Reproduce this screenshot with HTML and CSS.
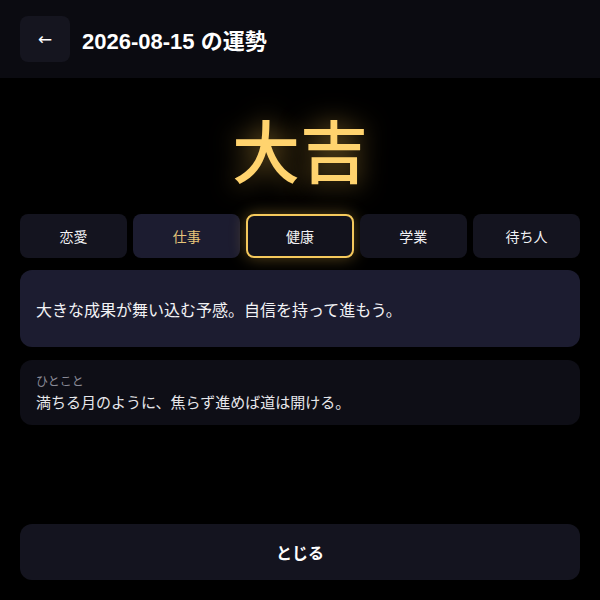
FILE: index.html
```html
<!DOCTYPE html>
<html lang="ja">
  <head>
    <meta charset="UTF-8" />
    <meta name="viewport" content="width=device-width, initial-scale=1.0" />
    <title>2026-08-15 の運勢</title>
    <link rel="stylesheet" href="styles.css">
  </head>
  <body>
    <div class="screen">
      <header class="topbar">
        <button class="back" onclick="history.back()">&larr;</button>
        <h1 class="title">2026-08-15 の運勢</h1>
      </header>

      <main class="content">
        <div class="rank">大吉</div>

        <div class="tabs">
          <button class="tab">恋愛</button>
          <button class="tab hover">仕事</button>
          <button class="tab active">健康</button>
          <button class="tab">学業</button>
          <button class="tab">待ち人</button>
        </div>

        <div class="message">大きな成果が舞い込む予感。自信を持って進もう。</div>

        <div class="note">
          <div class="note-label">ひとこと</div>
          <div class="note-text">満ちる月のように、焦らず進めば道は開ける。</div>
        </div>
      </main>

      <footer class="bottom">
        <button class="close">とじる</button>
      </footer>
    </div>
  </body>
</html>
```

FILE: styles.css
```css
body {
  margin: 0;
  background: #000;
  color: #f2f2f5;
  font-family: "Noto Sans CJK JP", "Noto Sans", sans-serif;
}
button {
  font-family: inherit;
  border: none;
  cursor: pointer;
}
.screen {
  height: 600px;
  display: flex;
  flex-direction: column;
}
.topbar {
  height: 78px;
  box-sizing: border-box;
  padding: 16px 20px;
  display: flex;
  align-items: center;
  gap: 12px;
  background: #0b0b11;
}
.back {
  width: 50px;
  height: 46px;
  border-radius: 8px;
  background: #15151f;
  color: #fff;
  font-family: "DejaVu Sans", sans-serif;
  font-size: 17px;
}
.title {
  margin: 0;
  font-family: "Liberation Sans", "Noto Sans CJK JP", sans-serif;
  font-size: 22px;
  font-weight: 700;
  color: #fff;
}
.content {
  flex: 1;
  padding: 0 20px;
  display: flex;
  flex-direction: column;
}
.rank {
  margin: 16px 0 8px;
  height: 112px;
  text-align: center;
  font-size: 68px;
  font-weight: 500;
  line-height: 110px;
  color: #ffd36e;
  text-shadow: 0 0 26px rgba(255, 200, 80, 0.5);
}
.tabs {
  display: grid;
  grid-template-columns: repeat(5, 1fr);
  gap: 6px;
}
.tab {
  height: 44px;
  border-radius: 8px;
  background: #14141f;
  color: #f2f2f5;
  font-size: 14px;
}
.tab.hover {
  background: #1c1c30;
  color: #e6c47a;
}
.tab.active {
  border: 2px solid #f5c95c;
  background: #12121c;
  box-shadow: 0 0 16px rgba(255, 200, 80, 0.35);
}
.message {
  margin-top: 12px;
  height: 77px;
  box-sizing: border-box;
  padding: 0 16px;
  display: flex;
  align-items: center;
  border-radius: 12px;
  background: #1c1c30;
  font-size: 16px;
}
.note {
  margin-top: 13px;
  padding: 12px 16px 11px;
  border-radius: 12px;
  background: #0e0e16;
}
.note-label {
  font-size: 12px;
  color: #8a8a96;
  line-height: 18px;
}
.note-text {
  font-size: 15px;
  line-height: 24px;
  color: #e6e6ea;
}
.bottom {
  padding: 0 20px 20px;
}
.close {
  width: 100%;
  height: 56px;
  border-radius: 12px;
  background: #14141f;
  color: #fff;
  font-size: 16px;
  font-weight: 700;
}
```
